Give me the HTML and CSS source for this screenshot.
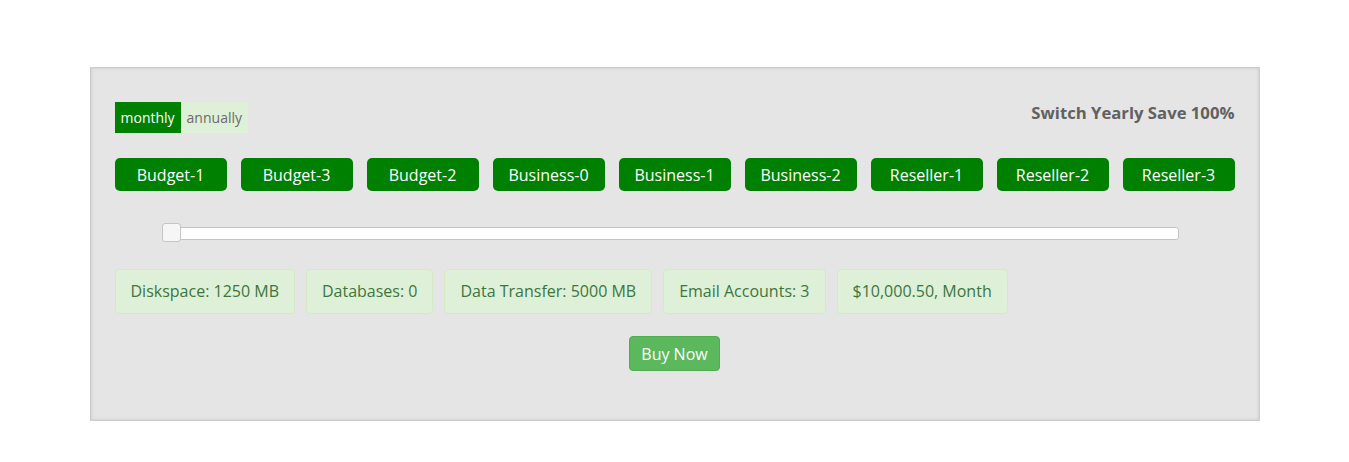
FILE: index.html
```html
<!DOCTYPE html>
<html>
<head>
<meta charset="utf-8">
<link rel="stylesheet" href="styles.css">
</head>
<body>
<div class="panel">
  <div class="top-row">
    <div class="period">
      <span class="period-opt active">monthly</span><span class="period-opt">annually</span>
    </div>
    <div class="switch-note">Switch Yearly Save 100%</div>
  </div>
  <div class="plans">
    <button class="plan">Budget-1</button>
    <button class="plan">Budget-3</button>
    <button class="plan">Budget-2</button>
    <button class="plan">Business-0</button>
    <button class="plan">Business-1</button>
    <button class="plan">Business-2</button>
    <button class="plan">Reseller-1</button>
    <button class="plan">Reseller-2</button>
    <button class="plan">Reseller-3</button>
  </div>
  <div class="slider">
    <div class="track"><span class="handle"></span></div>
  </div>
  <div class="specs">
    <div class="spec">Diskspace: 1250 MB</div>
    <div class="spec">Databases: 0</div>
    <div class="spec">Data Transfer: 5000 MB</div>
    <div class="spec">Email Accounts: 3</div>
    <div class="spec">$10,000.50, Month</div>
  </div>
  <div class="buy-row">
    <button class="buy">Buy Now</button>
  </div>
</div>
</body>
</html>
```
FILE: styles.css
```css
* { box-sizing: border-box; }
body {
  margin: 0;
  background: #fff;
  font-family: "Open Sans", "Liberation Sans", sans-serif;
}
.panel {
  width: 1170px;
  height: 354px;
  margin: 67px auto 0;
  background: #e5e5e5;
  box-shadow: inset 0 0 0 1px #cccccc, inset 0 0 3px 2px #d2d2d2;
  padding: 35px 25px 0;
}
.top-row {
  display: flex;
  justify-content: space-between;
  align-items: flex-start;
}
.period { display: flex; }
.period-opt {
  display: block;
  height: 31px;
  line-height: 31px;
  padding: 0 6px;
  font-size: 14px;
  color: #6b6b6b;
  background: #dff0d8;
}
.period-opt.active {
  background: #008000;
  color: #fff;
}
.switch-note {
  font-size: 16.7px;
  font-weight: 700;
  color: #616161;
  line-height: 22px;
}
.plans {
  display: flex;
  justify-content: space-between;
  margin-top: 25px;
}
.plan {
  width: 112px;
  height: 33px;
  border: 0;
  border-radius: 5px;
  background: #008000;
  color: #fff;
  font-family: inherit;
  font-size: 16px;
  padding: 0;
}
.slider {
  margin: 36px 56px 0 48px;
}
.track {
  position: relative;
  height: 13px;
  background: #fff;
  border: 1px solid #c5c5c5;
  border-radius: 3px;
}
.handle {
  position: absolute;
  left: -2px;
  top: -5px;
  width: 19px;
  height: 19px;
  background: #f6f6f6;
  border: 1px solid #c5c5c5;
  border-radius: 3px;
}
.specs {
  display: flex;
  gap: 11px;
  margin-top: 29px;
}
.spec {
  height: 45px;
  line-height: 43px;
  padding: 0 15px;
  background: #dff0d8;
  border: 1px solid #d6e9c6;
  border-radius: 4px;
  color: #3c763d;
  font-size: 16px;
}
.buy-row {
  display: flex;
  justify-content: center;
  margin-top: 22px;
}
.buy {
  height: 35px;
  padding: 0 11px;
  background: #5cb85c;
  border: 1px solid #4cae4c;
  border-radius: 4px;
  color: #fff;
  font-family: inherit;
  font-size: 16px;
}
```
